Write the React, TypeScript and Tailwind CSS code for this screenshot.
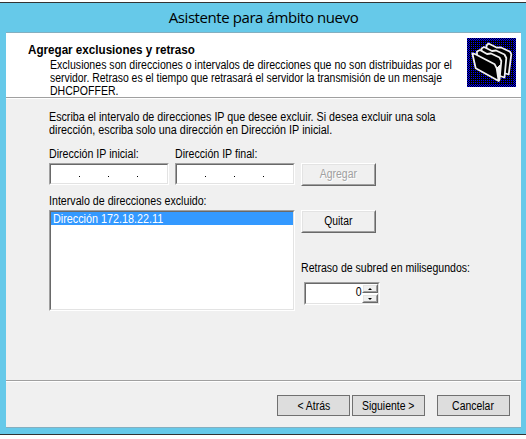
import type { ReactNode } from "react";

const sans = "font-['Liberation_Sans',Arial,sans-serif]";

function Sunken({ className, children }: { className: string; children?: ReactNode }) {
  return (
    <div className={`border border-t-[#a0a0a0] border-l-[#a0a0a0] border-r-white border-b-white ${className}`}>
      <div className="h-full border border-t-[#696969] border-l-[#696969] border-r-[#e3e3e3] border-b-[#e3e3e3] bg-white">
        {children}
      </div>
    </div>
  );
}

function Raised({ className, children }: { className: string; children?: ReactNode }) {
  return (
    <div className={`border border-t-white border-l-white border-r-[#696969] border-b-[#696969] ${className}`}>
      <div className="flex h-full items-center justify-center border border-t-[#e3e3e3] border-l-[#e3e3e3] border-r-[#a0a0a0] border-b-[#a0a0a0] bg-[#f0f0f0]">
        {children}
      </div>
    </div>
  );
}

function NavButton({ className, children }: { className?: string; children: ReactNode }) {
  return (
    <button className={`flex h-[21px] w-[73px] items-center justify-center border border-[#707070] bg-[#ddd] pt-px whitespace-nowrap ${className ?? ""}`}>
      <span className="scale-x-[0.87]">{children}</span>
    </button>
  );
}

function IpField() {
  return (
    <Sunken className="h-[22px] w-[120px]">
      <div className="flex gap-7 pt-[11px] pl-7">
        <i className="size-px bg-black" />
        <i className="size-px bg-black" />
        <i className="size-px bg-black" />
      </div>
    </Sunken>
  );
}

function Folders() {
  return (
    <svg width="49" height="49" viewBox="0 0 49 49" shapeRendering="crispEdges">
      <defs>
        <pattern id="dots" width="2" height="2" patternUnits="userSpaceOnUse">
          <rect width="2" height="2" fill="#000" />
          <rect width="1" height="1" fill="#0000ff" />
        </pattern>
        <pattern id="checker" width="2" height="2" patternUnits="userSpaceOnUse">
          <rect width="2" height="2" fill="#000" />
          <rect width="1" height="1" fill="#0000ff" />
          <rect x="1" y="1" width="1" height="1" fill="#0000ff" />
        </pattern>
      </defs>
      <rect width="49" height="49" fill="url(#checker)" />
      <rect x="2" y="2" width="45" height="45" fill="url(#dots)" />
      <g fill="#000" stroke="#f0f0f0" strokeWidth="1.8" strokeLinejoin="round" shapeRendering="auto">
        <path d="M19.500 10 L19.500 7.500 L21.500 5.500 L30 9.700 L34 9.500 L43 13.700 L44.300 16.300 L41.700 36.500 L37 35 Z" />
        <path d="M14.500 13 L14.500 10.500 L17 9 L25 13 L29 12.500 L37.500 16.500 L39.300 20 L37.500 39.500 L33 38 Z" />
        <path d="M10 17 L10 13.500 L13 12 L20 16 L24 15.500 L32.500 19.500 L34.300 23 L32.500 42 L28 38 Z" />
        <path d="M5.300 15.300 L8 16 L27.700 26.300 L29.700 30.300 L31.700 43 L8.700 30.300 Z" />
      </g>
      <path d="M29 30 L33 27 L32.500 43 Z" fill="#f0f0f0" />
    </svg>
  );
}

export default function App() {
  return (
    <div className={`h-[439px] w-[526px] overflow-hidden bg-white pt-0.5 text-[12px] leading-[13px] text-black ${sans}`}>
      <div className="flex h-[433px] flex-col border-y border-[#333] bg-[#66c9e9] pr-[5px] pl-1.5">
        <div className="h-[29px] text-center font-['Open_Sans','Noto_Sans',sans-serif] text-[15px] leading-[29px] tracking-[-0.42px] whitespace-nowrap">
          Asistente para ámbito nuevo
        </div>
        <div className="flex h-[396px] flex-col border-y border-[#84afc0] bg-[#f0f0f0]">
          <div className="flex h-[65px] border-b border-[#a0a0a0] bg-white pt-[5px]">
            <div className="w-[461px] pt-1.5 pl-[22px] whitespace-nowrap">
              <h1 className="w-fit origin-left scale-x-[0.97] font-bold">Agregar exclusiones y retraso</h1>
              <div className="pt-0.5 pl-[22px]">
                <p className="w-fit origin-left scale-x-[0.881]">Exclusiones son direcciones o intervalos de direcciones que no son distribuidas por el</p>
                <p className="w-fit origin-left scale-x-[0.868]">servidor. Retraso es el tiempo que retrasará el servidor la transmisión de un mensaje</p>
                <p className="w-fit origin-left scale-x-[0.878]">DHCPOFFER.</p>
              </div>
            </div>
            <Folders />
          </div>
          <div className="h-px shrink-0 bg-white" />
          <div className="h-[281px] pt-3 pl-[43px] whitespace-nowrap">
            <p className="w-fit origin-left scale-x-[0.892]">Escriba el intervalo de direcciones IP que desee excluir. Si desea excluir una sola</p>
            <p className="w-fit origin-left scale-x-[0.9]">dirección, escriba solo una dirección en Dirección IP inicial.</p>
            <div className="mt-[11px] flex">
              <div className="w-[126px]">
                <p className="w-fit origin-left scale-x-[0.887]">Dirección IP inicial:</p>
              </div>
              <p className="origin-left scale-x-[0.884]">Dirección IP final:</p>
            </div>
            <div className="mt-0.5 flex h-[23px] gap-1.5">
              <IpField />
              <IpField />
              <Raised className="h-[23px] w-[75px]">
                <span className="scale-x-[0.87] text-[#a0a0a0] [text-shadow:1px_1px_#fff]">Agregar</span>
              </Raised>
            </div>
            <p className="mt-[9px] w-fit origin-left scale-x-[0.888]">Intervalo de direcciones excluido:</p>
            <div className="mt-0.5 flex gap-1.5">
              <Sunken className="h-[101px] w-[246px]">
                <div className="h-[13px] bg-[#3399ff] pl-0.5 text-white">
                  <p className="w-fit origin-left scale-x-[0.9] leading-[14px]">Dirección 172.18.22.11</p>
                </div>
              </Sunken>
              <div>
                <Raised className="h-[23px] w-[75px]">
                  <span className="scale-x-[0.86]">Quitar</span>
                </Raised>
                <p className="mt-[29px] w-fit origin-left scale-x-[0.88]">Retraso de subred en milisegundos:</p>
                <Sunken className="mt-[7px] ml-[3px] h-[23px] w-[76px]">
                  <div className="flex justify-end">
                    <span className="origin-right scale-x-[0.88] pt-0.5">0</span>
                    <div>
                      <Raised className="h-[9px] w-4"><i className="h-0 border-x-2 border-b-2 border-x-transparent border-b-black" /></Raised>
                      <Raised className="mt-px h-[9px] w-4"><i className="h-0 border-x-2 border-t-2 border-x-transparent border-t-black" /></Raised>
                    </div>
                  </div>
                </Sunken>
              </div>
            </div>
          </div>
          <div className="flex h-[47px] border-t border-[#a0a0a0]">
            <div className="flex flex-1 justify-end border-t border-white pt-[13px] pr-[11px]">
              <NavButton>&lt; Atrás</NavButton>
              <NavButton className="ml-0.5">Siguiente &gt;</NavButton>
              <NavButton className="ml-3">Cancelar</NavButton>
            </div>
          </div>
        </div>
      </div>
    </div>
  );
}
